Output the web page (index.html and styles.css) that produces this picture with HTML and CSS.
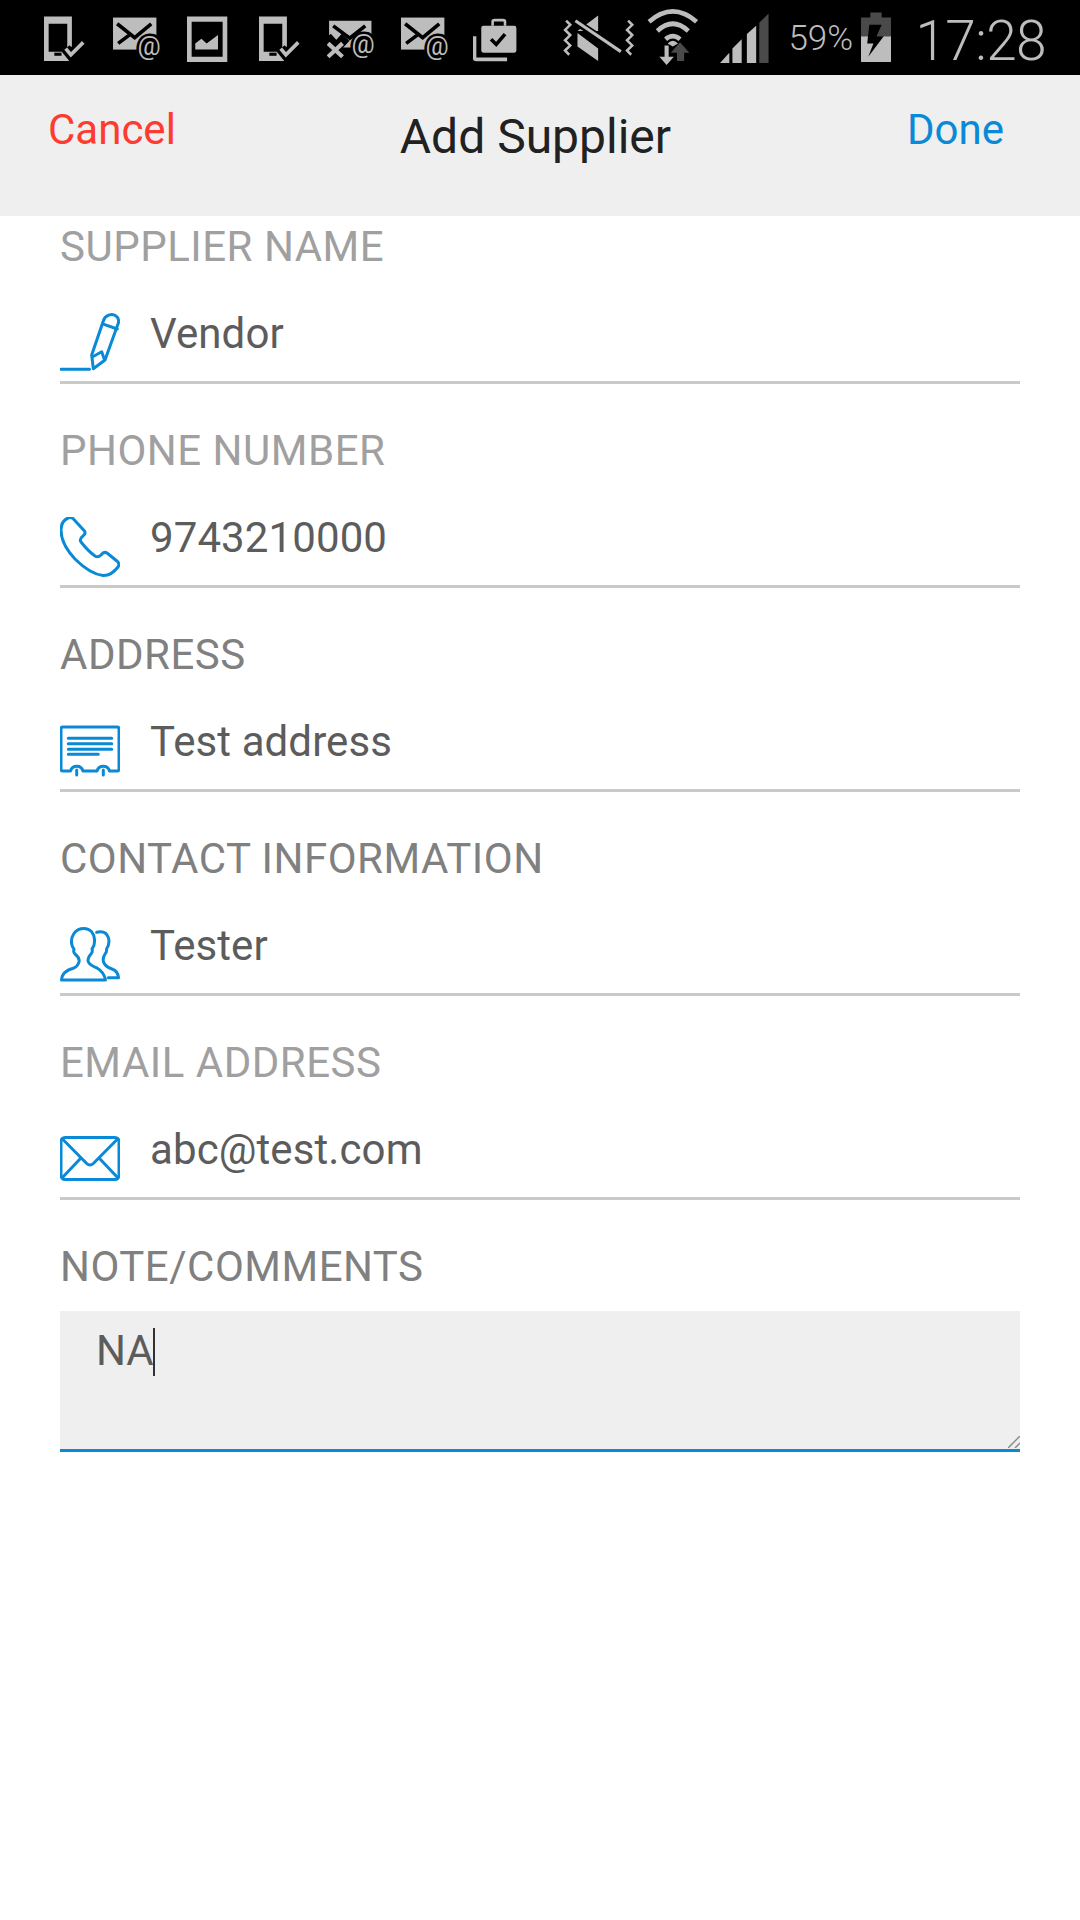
FILE: index.html
```html
<!DOCTYPE html>
<html lang="en">
<head>
<meta charset="utf-8">
<title>Add Supplier</title>
<link rel="stylesheet" href="styles.css">
</head>
<body>
<div class="status">
  <div class="status-left">
    <svg width="69" height="75" viewBox="0 0 66.800 72.600"><path class="g" fill-rule="evenodd" d="M0 16H27V59H0ZM4.500 23V50H22.500V23Z"/><rect class="k" x="10" y="51" width="7" height="3"/><path class="kl" d="M21 47L26 53L38 41"/><path class="gl" d="M21 47L26 53L38 41"/></svg>
    <svg width="74" height="75" viewBox="0 0 71.600 72.600"><rect class="g" x="0" y="17" width="42" height="31"/><path class="kt" d="M4 23L21 36.500L37 23M5 42L17 33"/><text class="atx" x="35" y="53">@</text></svg>
    <svg width="72" height="75" viewBox="0 0 69.700 72.600"><path class="g" fill-rule="evenodd" d="M0 16H39V60H0ZM4.500 21V55H34.500V21Z"/><path class="g" d="M8 48V42L14 37.500L19 42L30 34V48Z"/></svg>
    <svg width="68" height="75" viewBox="0 0 65.800 72.600"><path class="g" fill-rule="evenodd" d="M0 16H27V59H0ZM4.500 23V50H22.500V23Z"/><rect class="k" x="10" y="51" width="7" height="3"/><path class="kl" d="M21 47L26 53L38 41"/><path class="gl" d="M21 47L26 53L38 41"/></svg>
    <svg width="74" height="75" viewBox="0 0 71.600 72.600"><path class="g" d="M2 20H43V46H2Z"/><path class="kt" d="M6 25L22 37L37 25"/><path class="kk" d="M0 36L18 56M18 36L0 56"/><path class="xl" d="M1 42L15 55M15 42L1 55"/><text class="atx" x="35" y="51">@</text></svg>
    <svg width="72" height="75" viewBox="0 0 69.700 72.600"><rect class="g" x="0" y="17" width="42" height="31"/><path class="kt" d="M4 23L21 36.500L37 23M5 42L17 33"/><text class="atx" x="35" y="53">@</text></svg>
    <svg width="44" height="75" viewBox="0 0 42.600 72.600"><rect class="g" x="8" y="25" width="34" height="26" rx="2"/><path class="at" d="M19 25V21Q19 19.500 21 19.500H29Q31 19.500 31 21V25"/><path class="kt" d="M17.500 38L22.500 43L31 33"/><path class="ln" d="M1.500 35V56Q1.500 57.500 3 57.500H33"/></svg>
  </div>
  <div class="status-right">
    <svg width="84" height="75" viewBox="0 0 81.300 72.600"><path class="g" d="M14 30L34 30L34 15L14 30ZM14 32V45L34 59V47Z"/><path class="kt7" d="M11 20L56 50"/><path class="gt" d="M12 20L56 50"/><path class="zig" d="M3 20L7 24L2 29L7 34L2 39L7 44L2 49L6 53"/><path class="zig" d="M63 20L67 24L62 29L67 34L62 39L67 44L62 49L66 53"/></svg>
    <svg width="73" height="75" viewBox="0 0 70.700 72.600"><path class="wf" d="M2 21Q25 1 48 21"/><path class="wf" d="M10 30Q25 16 40 30"/><path class="wf" d="M18 38Q25 32 32 38"/><path class="g" d="M20 42Q25 37 30 42L25 45Z"/><path class="g" d="M17 44H21V55H26L19 63L12 55H17Z"/><path class="d" d="M32 41L41 51H36V59H29V51H23Z"/></svg>
    <svg width="68" height="75" viewBox="0 0 65.800 72.600"><path class="g" d="M0 61L9 51V61Z"/><path class="g" d="M12 61V47L21 38V61Z"/><path class="g" d="M26 61V33L35 25V61Z"/><path class="d" d="M38 61V22L47 13V61Z"/></svg>
    <span class="pct">59%</span>
    <svg class="batt" width="30" height="75" viewBox="0 0 29 72.600"><path class="g" d="M0 35H29V60H0Z"/><path class="d" d="M9 12H20V17H29V35H0V17H9Z"/><path class="k" d="M17 24H8L6 42H12L7 55L22 35H15L20 24Z"/></svg>
    <span class="clock">17:28</span>
  </div>
</div>

<header class="bar">
  <span class="cancel">Cancel</span>
  <h1 class="title">Add Supplier</h1>
  <span class="done">Done</span>
</header>

<main class="form">
  <section class="group">
    <div class="label light">SUPPLIER NAME</div>
    <div class="field">
      <svg class="icon" viewBox="0 0 60 68"><path d="M1 56.300H29.500"/><path d="M33.300 55.700L31.700 42L43.300 8C45 2 52 0 56 3C59 5 59 9 58 11L45 47Z"/><path d="M44 11.300L57.300 16M32.700 43.700L41.700 38.700L44.300 46.300"/></svg>
      <span class="value">Vendor</span>
    </div>
  </section>
  <section class="group">
    <div class="label light">PHONE NUMBER</div>
    <div class="field">
      <svg class="icon" viewBox="0 0 60 68"><path d="M13 1.500L24.500 14Q26 17 23 19Q19 22 21 25Q28 34 35 39Q38 41 41 38Q44 34 47 36L57.500 44.500Q60 47 58 50Q51 59 43 58.500Q30 57 15 42Q1 27 1 13Q1 4 8 1Q11 0 13 1.500Z"/></svg>
      <span class="value">9743210000</span>
    </div>
  </section>
  <section class="group">
    <div class="label dark">ADDRESS</div>
    <div class="field">
      <svg class="icon" viewBox="0 0 60 68"><path d="M3 6H57Q59 6 59 8V48Q59 50 57 50H49.500A6.500 6.500 0 0 0 37 50H23A6.500 6.500 0 0 0 10.500 50H3Q1 50 1 48V8Q1 6 3 6Z"/><path d="M8.300 17.300H51.700M8.300 22.700H51.700M8.300 28.300H51.700M8.300 33.300H38.300M16.700 49V54M43.300 49V54"/></svg>
      <span class="value">Test address</span>
    </div>
  </section>
  <section class="group">
    <div class="label dark">CONTACT INFORMATION</div>
    <div class="field">
      <svg class="icon" viewBox="0 0 60 68"><path d="M24 3.500C15 3.500 11 11 11.500 18Q12 22 14 24Q13 27 15 29Q20 33 19 37Q18 41 14 43Q2 46 1.500 55H45.500Q44 47 37 43Q29 40 28 36Q28 32 31 29Q33 27 32 24Q35 20 34.500 15C34 8 30 3.500 24 3.500Z"/><path d="M36.700 7.300Q46 5 48.500 13Q50 19 46.500 24Q47 27 45 29Q42 34 44 38Q46 42 52 44Q58 46 58.500 52.700H48.300"/></svg>
      <span class="value">Tester</span>
    </div>
  </section>
  <section class="group">
    <div class="label light">EMAIL ADDRESS</div>
    <div class="field">
      <svg class="icon" viewBox="0 0 60 68"><rect x="1" y="8.500" width="58" height="42" rx="4"/><path d="M2.700 10.300L26.700 34.500Q30 37.500 33.300 34.500L57.300 10.300M20.700 29.300L2.700 48.300M39.300 29.300L57.300 48.300"/></svg>
      <span class="value">abc@test.com</span>
    </div>
  </section>
  <section class="group">
    <div class="label dark">NOTE/COMMENTS</div>
    <div class="note">
      <span class="note-text">NA</span><span class="caret"></span>
      <svg class="grip" width="12" height="12" viewBox="0 0 12 12"><path d="M0 12L12 0M7 12L12 7"/></svg>
    </div>
  </section>
</main>
</body>
</html>
```

FILE: styles.css
```css
* {
  box-sizing: border-box;
}

html,
body {
  margin: 0;
  padding: 0;
  background: #fff;
}

body {
  width: 1080px;
  height: 1920px;
  overflow: hidden;
  font-family: Roboto, "Liberation Sans", sans-serif;
}

/* status bar */
.status {
  height: 75px;
  background: #000;
  display: flex;
  justify-content: space-between;
  padding: 0 34px 0 44px;
}

.status-left,
.status-right {
  display: flex;
  align-items: flex-start;
}

.status svg {
  display: block;
  flex: none;
}

.g { fill: #bdbdbd; }
.d { fill: #4a4a4a; }
.k { fill: #000; }
.kt { fill: none; stroke: #000; stroke-width: 3.500; }
.kt7 { fill: none; stroke: #000; stroke-width: 7; }
.gt { fill: none; stroke: #bdbdbd; stroke-width: 3; }
.kl { fill: none; stroke: #000; stroke-width: 10; }
.gl { fill: none; stroke: #bdbdbd; stroke-width: 3.500; }
.kk { fill: none; stroke: #000; stroke-width: 10; }
.xl { fill: none; stroke: #bdbdbd; stroke-width: 4; }
.at { fill: none; stroke: #bdbdbd; stroke-width: 2.500; }
.ln { fill: none; stroke: #bdbdbd; stroke-width: 3.500; }
.zig { fill: none; stroke: #bdbdbd; stroke-width: 2.500; }
.wf { fill: none; stroke: #bdbdbd; stroke-width: 4.500; }

.atx {
  font-size: 25px;
  fill: #bdbdbd;
  stroke: #000;
  stroke-width: 5px;
  paint-order: stroke;
  text-anchor: middle;
}

.pct {
  width: 73px;
  padding-top: 19px;
  font-size: 35px;
  line-height: 40px;
  font-weight: 300;
  color: #bdbdbd;
}

.clock {
  margin-left: 24px;
  padding-top: 9px;
  font-size: 55px;
  letter-spacing: -0.600px;
  line-height: 64px;
  font-weight: 300;
  color: #bdbdbd;
}

/* header */
.bar {
  height: 141px;
  background: #efefef;
  display: flex;
  justify-content: space-between;
  align-items: flex-start;
  padding: 32px 76px 0 48px;
}

.cancel,
.done {
  font-size: 42px;
  line-height: 46px;
}

.cancel {
  color: #ff3b30;
}

.done {
  color: #0a8ad6;
}

.title {
  margin: 3px 12px 0 0;
  font-size: 48px;
  line-height: 54px;
  font-weight: 400;
  color: #212121;
}

/* form */
.form {
  display: flex;
  flex-direction: column;
  padding: 0 60px;
}

.group {
  height: 204px;
}

.label {
  height: 60px;
  padding-top: 4px;
  font-size: 42px;
  letter-spacing: 0.500px;
  line-height: 54px;
  white-space: nowrap;
}

.light {
  color: #a0a0a0;
}

.dark {
  color: #808080;
}

.field {
  height: 108px;
  border-bottom: 3px solid #c9c9c9;
  display: flex;
  align-items: flex-end;
}

.icon {
  display: block;
  flex: none;
  width: 60px;
  height: 68px;
  margin-right: 30px;
  fill: none;
  stroke: #0a8ad6;
  stroke-width: 3;
  stroke-linejoin: round;
  stroke-linecap: round;
}

.value {
  align-self: flex-start;
  padding-top: 33px;
  font-size: 42px;
  letter-spacing: 0.100px;
  line-height: 50px;
  color: #5c5c5c;
}

/* note */
.note {
  position: relative;
  height: 141px;
  margin-top: 15px;
  background: #efefef;
  border-bottom: 3px solid #0a8ad6;
  padding: 15px 0 0 36px;
  display: flex;
  align-items: flex-start;
}

.note-text {
  font-size: 42px;
  line-height: 50px;
  color: #5c5c5c;
}

.caret {
  width: 2px;
  height: 48px;
  margin: 2px 0 0 -1px;
  background: #333;
}

.grip {
  position: absolute;
  right: 0;
  bottom: 1px;
  fill: none;
  stroke: #8a8a8a;
  stroke-width: 1.500;
}
```
